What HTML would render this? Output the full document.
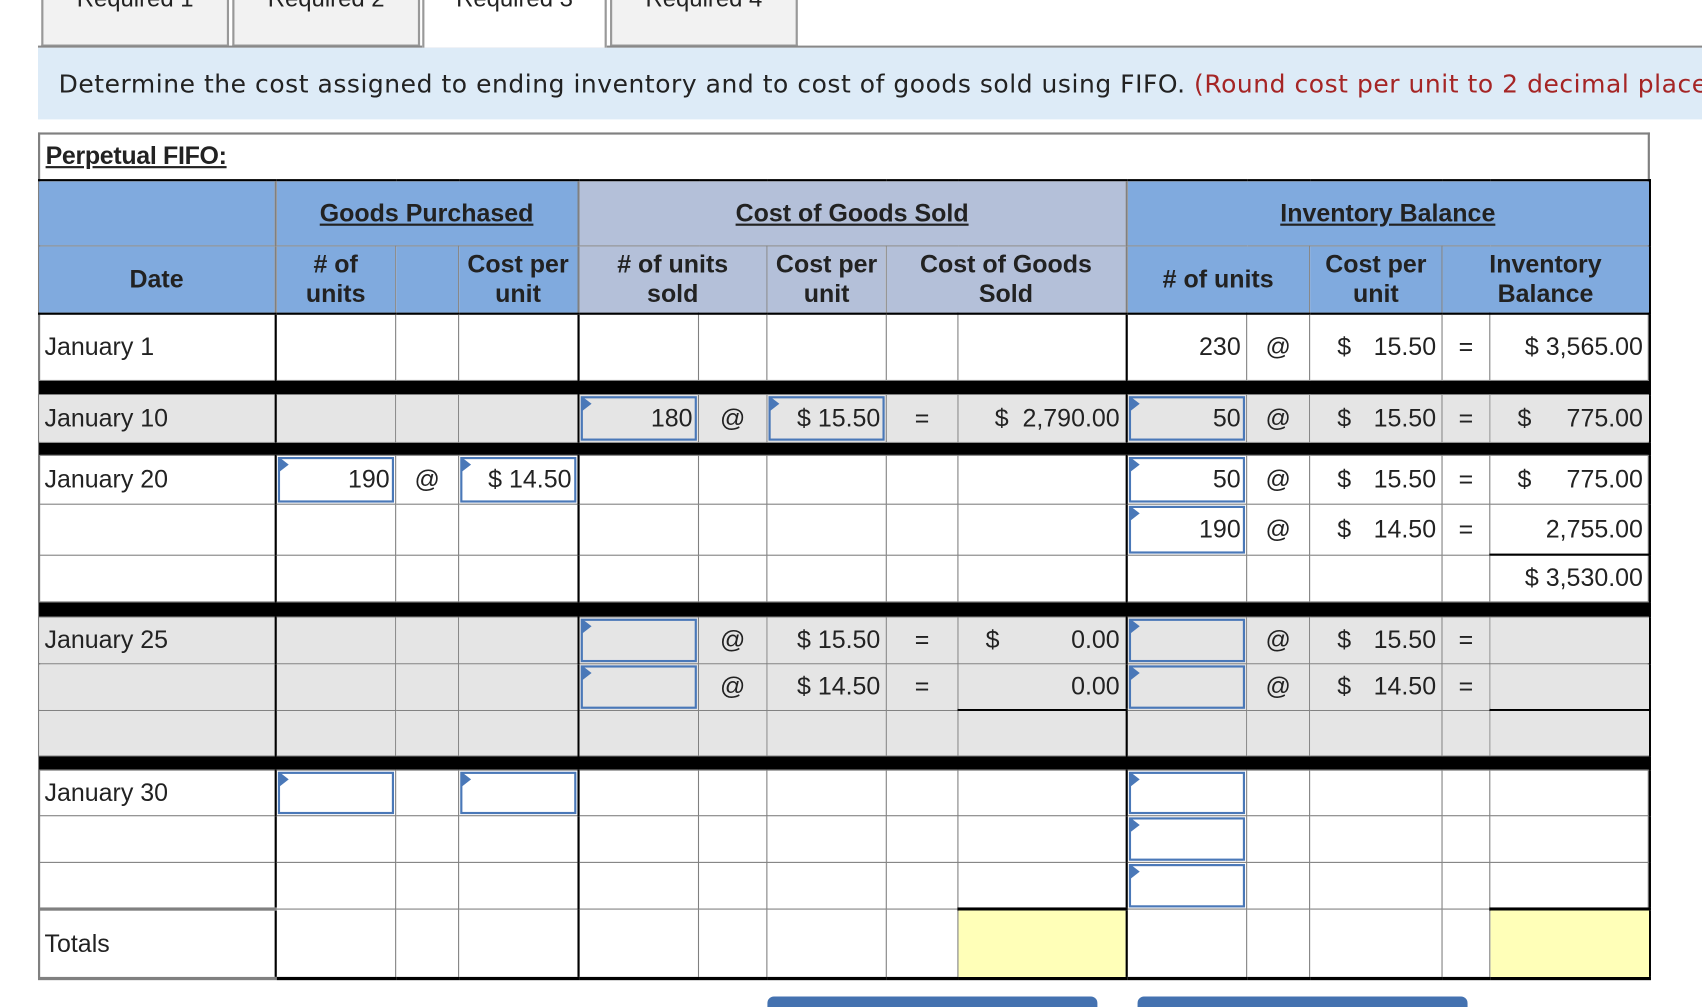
<!DOCTYPE html>
<html><head><meta charset="utf-8"><style>
*{margin:0;padding:0;box-sizing:border-box}
html,body{width:1702px;height:1004px;overflow:hidden;background:#fff}
#w{position:absolute;left:0;top:0;width:1568px;height:925px;transform:scale(1.08546);transform-origin:0 0;font-family:"Liberation Sans",Arial,sans-serif;color:#222}
.tab{position:absolute;top:-2px;height:45px;background:#f2f2f2;border:2px solid #999;border-top:none;font:22px "Liberation Sans",sans-serif;text-align:center;line-height:10px;color:#222;overflow:hidden}
.tab span{position:relative;top:-4px}
#tabline{position:absolute;left:35px;top:42px;width:1533px;height:2px;background:#888}
#ins{position:absolute;left:35px;top:44px;width:1533px;height:66px;background:#ddebf7;font:23px "DejaVu Sans",Verdana,sans-serif;line-height:68px;padding-left:19px;white-space:nowrap;overflow:hidden;letter-spacing:0.5px}
#ins b{font-weight:normal;color:#a52525}
#box{position:absolute;left:35px;top:122px;width:1485px;height:779px;border:2px solid #808080;border-bottom:none}
#pf{position:absolute;left:42px;top:130px;font:bold 23px "Liberation Sans",sans-serif;text-decoration:underline;letter-spacing:-0.3px}
table{position:absolute;left:35px;top:165px;border-collapse:collapse;table-layout:fixed;width:1485px}
td{border:1px solid #808080;padding:0 5px;font-size:23px;position:relative;white-space:nowrap;overflow:visible}
.h td{background:#80aade;font-weight:bold;text-align:center;line-height:27px;border-color:#808080}
.h td.g{background:#b4c0d9}
.h1 td{border-top:2px solid #000}
.bl{border-left:2px solid #000}
tr td:last-child{border-right:2px solid #000}
.bar td{background:#000;border:none;padding:0}
.gr td{background:#e5e5e5}
.r{text-align:right}
.c{text-align:center;padding:0}
.d{display:flex;justify-content:space-between;padding-left:20px}
.in{position:absolute;left:1px;top:1px;right:1px;bottom:1px;border:2px solid #4a78b8}
.in:before{content:"";position:absolute;left:-1px;top:-1px;border-left:9px solid #4a78b8;border-top:7px solid transparent;border-bottom:7px solid transparent;transform:translateY(-1px)}
.tx{position:relative;z-index:1}
.ubb{border-bottom:2px solid #000}
.y{background:#ffffb8 !important;border-top:3px solid #000;border-bottom:3px solid #000;box-shadow:inset 0 -4px 0 #ffffb8}
.btn{position:absolute;top:918px;height:10px;background:#4472b0;border-radius:6px 6px 0 0}
</style></head><body><div id="w">
<div class="tab" style="left:38px;width:173px"><span>Required 1</span></div>
<div class="tab" style="left:214px;width:173px"><span>Required 2</span></div>
<div class="tab" style="left:562px;width:173px"><span>Required 4</span></div>
<div id="tabline"></div>
<div class="tab" style="left:389px;width:170px;background:#fff;height:46px;border-bottom:none"><span>Required 3</span></div>
<div id="ins">Determine the cost assigned to ending inventory and to cost of goods sold using FIFO. <b>(Round cost per unit to 2 decimal places.)</b></div>
<div id="box"></div>
<div id="pf">Perpetual FIFO:</div>
<table>
<colgroup><col style="width:218px"><col style="width:111px"><col style="width:58px"><col style="width:110px"><col style="width:111px"><col style="width:63px"><col style="width:110px"><col style="width:66px"><col style="width:155px"><col style="width:111px"><col style="width:58px"><col style="width:122px"><col style="width:44px"><col style="width:147px"></colgroup>
<tr class="h h1" style="height:60px"><td></td><td colspan="3" class="bl"><u>Goods Purchased</u></td><td colspan="5" class="g bl"><u>Cost of Goods Sold</u></td><td colspan="5" class="bl"><u>Inventory Balance</u></td></tr>
<tr class="h" style="height:63px"><td style="border-bottom:2px solid #000">Date</td><td class="bl" style="border-bottom:2px solid #000"># of<br>units</td><td style="border-bottom:2px solid #000"></td><td style="border-bottom:2px solid #000">Cost per<br>unit</td><td colspan="2" class="g bl" style="border-bottom:2px solid #000"># of units<br>sold</td><td class="g" style="border-bottom:2px solid #000">Cost per<br>unit</td><td colspan="2" class="g" style="border-bottom:2px solid #000">Cost of Goods<br>Sold</td><td colspan="2" class="bl" style="border-bottom:2px solid #000"># of units</td><td style="border-bottom:2px solid #000">Cost per<br>unit</td><td colspan="2" style="border-bottom:2px solid #000">Inventory<br>Balance</td></tr>
<tr style="height:61px"><td>January 1</td><td class="bl"></td><td></td><td></td><td class="bl"></td><td></td><td></td><td></td><td></td><td class="bl r">230</td><td class="c">@</td><td><div class="d"><span>$</span><span>15.50</span></div></td><td class="c">=</td><td class="r">$ 3,565.00</td></tr>
<tr class="bar" style="height:13px"><td colspan="14"></td></tr>
<tr class="gr" style="height:44px"><td>January 10</td><td class="bl"></td><td></td><td></td><td class="bl r"><div class="in"></div><span class="tx">180</span></td><td class="c">@</td><td class="r"><div class="in"></div><span class="tx">$ 15.50</span></td><td class="c">=</td><td class="r">$&nbsp;&nbsp;2,790.00</td><td class="bl r"><div class="in"></div><span class="tx">50</span></td><td class="c">@</td><td><div class="d"><span>$</span><span>15.50</span></div></td><td class="c">=</td><td><div class="d"><span>$</span><span>775.00</span></div></td></tr>
<tr class="bar" style="height:12px"><td colspan="14"></td></tr>
<tr style="height:45px"><td>January 20</td><td class="bl r"><div class="in"></div><span class="tx">190</span></td><td class="c">@</td><td class="r"><div class="in"></div><span class="tx">$ 14.50</span></td><td class="bl"></td><td></td><td></td><td></td><td></td><td class="bl r"><div class="in"></div><span class="tx">50</span></td><td class="c">@</td><td><div class="d"><span>$</span><span>15.50</span></div></td><td class="c">=</td><td><div class="d"><span>$</span><span>775.00</span></div></td></tr>
<tr style="height:47px"><td></td><td class="bl"></td><td></td><td></td><td class="bl"></td><td></td><td></td><td></td><td></td><td class="bl r"><div class="in"></div><span class="tx">190</span></td><td class="c">@</td><td><div class="d"><span>$</span><span>14.50</span></div></td><td class="c">=</td><td class="r ubb">2,755.00</td></tr>
<tr style="height:43px"><td></td><td class="bl"></td><td></td><td></td><td class="bl"></td><td></td><td></td><td></td><td></td><td class="bl"></td><td></td><td></td><td></td><td class="r">$ 3,530.00</td></tr>
<tr class="bar" style="height:14px"><td colspan="14"></td></tr>
<tr class="gr" style="height:43px"><td>January 25</td><td class="bl"></td><td></td><td></td><td class="bl"><div class="in"></div></td><td class="c">@</td><td class="r">$ 15.50</td><td class="c">=</td><td><div class="d"><span>$</span><span>0.00</span></div></td><td class="bl"><div class="in"></div></td><td class="c">@</td><td><div class="d"><span>$</span><span>15.50</span></div></td><td class="c">=</td><td></td></tr>
<tr class="gr" style="height:43px"><td></td><td class="bl"></td><td></td><td></td><td class="bl"><div class="in"></div></td><td class="c">@</td><td class="r">$ 14.50</td><td class="c">=</td><td class="r ubb">0.00</td><td class="bl"><div class="in"></div></td><td class="c">@</td><td><div class="d"><span>$</span><span>14.50</span></div></td><td class="c">=</td><td class="ubb"></td></tr>
<tr class="gr" style="height:42px"><td></td><td class="bl"></td><td></td><td></td><td class="bl"></td><td></td><td></td><td></td><td></td><td class="bl"></td><td></td><td></td><td></td><td></td></tr>
<tr class="bar" style="height:13px"><td colspan="14"></td></tr>
<tr style="height:42px"><td>January 30</td><td class="bl"><div class="in"></div></td><td></td><td><div class="in"></div></td><td class="bl"></td><td></td><td></td><td></td><td></td><td class="bl"><div class="in"></div></td><td></td><td></td><td></td><td></td></tr>
<tr style="height:43px"><td></td><td class="bl"></td><td></td><td></td><td class="bl"></td><td></td><td></td><td></td><td></td><td class="bl"><div class="in"></div></td><td></td><td></td><td></td><td></td></tr>
<tr style="height:43px"><td></td><td class="bl"></td><td></td><td></td><td class="bl"></td><td></td><td></td><td></td><td></td><td class="bl"><div class="in"></div></td><td></td><td></td><td></td><td></td></tr>
<tr style="height:64px"><td style="border-bottom:3px solid #808080;border-top:3px solid #808080">Totals</td><td class="bl" style="border-bottom:3px solid #000"></td><td style="border-bottom:3px solid #000"></td><td style="border-bottom:3px solid #000"></td><td class="bl" style="border-bottom:3px solid #000"></td><td style="border-bottom:3px solid #000"></td><td style="border-bottom:3px solid #000"></td><td style="border-bottom:3px solid #000"></td><td class="y"></td><td class="bl" style="border-bottom:3px solid #000"></td><td style="border-bottom:3px solid #000"></td><td style="border-bottom:3px solid #000"></td><td style="border-bottom:3px solid #000"></td><td class="y"></td></tr>
</table>
<div class="btn" style="left:707px;width:304px"></div>
<div class="btn" style="left:1048px;width:304px"></div>
</div></body></html>
